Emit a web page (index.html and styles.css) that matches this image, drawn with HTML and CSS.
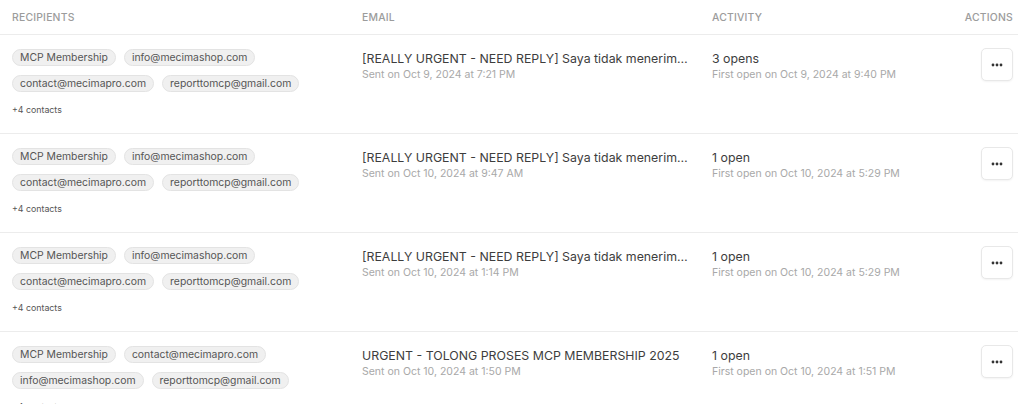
FILE: index.html
```html
<!DOCTYPE html>
<html lang="en">
<head>
    <meta charset="UTF-8">
    <meta name="viewport" content="width=device-width, initial-scale=1.0">
    <title>Sent emails</title>
    <link rel="stylesheet" href="styles.css">
</head>
<body>
    <div class="table">
        <div class="row head">
            <div class="cell">Recipients</div>
            <div class="cell">Email</div>
            <div class="cell">Activity</div>
            <div class="cell actions">Actions</div>
        </div>

        <div class="row">
            <div class="cell">
                <div class="chips">
                    <span class="chip">MCP Membership</span>
                    <span class="chip">info@mecimashop.com</span>
                    <span class="chip">contact@mecimapro.com</span>
                    <span class="chip">reporttomcp@gmail.com</span>
                </div>
                <div class="more">+4 contacts</div>
            </div>
            <div class="cell">
                <div class="title">[REALLY URGENT - NEED REPLY] Saya tidak menerima balasan apapun</div>
                <div class="sub">Sent on Oct 9, 2024 at 7:21 PM</div>
            </div>
            <div class="cell">
                <div class="title">3 opens</div>
                <div class="sub">First open on Oct 9, 2024 at 9:40 PM</div>
            </div>
            <div class="cell actions">
                <button class="menu-btn"><svg width="12" height="4" viewBox="0 0 12 4"><circle cx="2" cy="2" r="1.4"/><circle cx="6" cy="2" r="1.4"/><circle cx="10" cy="2" r="1.4"/></svg></button>
            </div>
        </div>

        <div class="row">
            <div class="cell">
                <div class="chips">
                    <span class="chip">MCP Membership</span>
                    <span class="chip">info@mecimashop.com</span>
                    <span class="chip">contact@mecimapro.com</span>
                    <span class="chip">reporttomcp@gmail.com</span>
                </div>
                <div class="more">+4 contacts</div>
            </div>
            <div class="cell">
                <div class="title">[REALLY URGENT - NEED REPLY] Saya tidak menerima balasan apapun</div>
                <div class="sub">Sent on Oct 10, 2024 at 9:47 AM</div>
            </div>
            <div class="cell">
                <div class="title">1 open</div>
                <div class="sub">First open on Oct 10, 2024 at 5:29 PM</div>
            </div>
            <div class="cell actions">
                <button class="menu-btn"><svg width="12" height="4" viewBox="0 0 12 4"><circle cx="2" cy="2" r="1.4"/><circle cx="6" cy="2" r="1.4"/><circle cx="10" cy="2" r="1.4"/></svg></button>
            </div>
        </div>

        <div class="row">
            <div class="cell">
                <div class="chips">
                    <span class="chip">MCP Membership</span>
                    <span class="chip">info@mecimashop.com</span>
                    <span class="chip">contact@mecimapro.com</span>
                    <span class="chip">reporttomcp@gmail.com</span>
                </div>
                <div class="more">+4 contacts</div>
            </div>
            <div class="cell">
                <div class="title">[REALLY URGENT - NEED REPLY] Saya tidak menerima balasan apapun</div>
                <div class="sub">Sent on Oct 10, 2024 at 1:14 PM</div>
            </div>
            <div class="cell">
                <div class="title">1 open</div>
                <div class="sub">First open on Oct 10, 2024 at 5:29 PM</div>
            </div>
            <div class="cell actions">
                <button class="menu-btn"><svg width="12" height="4" viewBox="0 0 12 4"><circle cx="2" cy="2" r="1.4"/><circle cx="6" cy="2" r="1.4"/><circle cx="10" cy="2" r="1.4"/></svg></button>
            </div>
        </div>

        <div class="row">
            <div class="cell">
                <div class="chips">
                    <span class="chip">MCP Membership</span>
                    <span class="chip">contact@mecimapro.com</span>
                    <span class="chip">info@mecimashop.com</span>
                    <span class="chip">reporttomcp@gmail.com</span>
                </div>
                <div class="more">+4 contacts</div>
            </div>
            <div class="cell">
                <div class="title">URGENT - TOLONG PROSES MCP MEMBERSHIP 2025</div>
                <div class="sub">Sent on Oct 10, 2024 at 1:50 PM</div>
            </div>
            <div class="cell">
                <div class="title">1 open</div>
                <div class="sub">First open on Oct 10, 2024 at 1:51 PM</div>
            </div>
            <div class="cell actions">
                <button class="menu-btn"><svg width="12" height="4" viewBox="0 0 12 4"><circle cx="2" cy="2" r="1.4"/><circle cx="6" cy="2" r="1.4"/><circle cx="10" cy="2" r="1.4"/></svg></button>
            </div>
        </div>
    </div>
</body>
</html>
```

FILE: styles.css
```css
body {
    margin: 0;
    font-family: Inter, "Liberation Sans", sans-serif;
    background-color: white;
    color: #3d3d3d;
    overflow: hidden;
}
.table {
    width: 1018px;
}
.row {
    display: grid;
    grid-template-columns: 350px 350px 1fr 80px;
    border-bottom: 1px solid #ececec;
    padding: 14px 0 16px;
}
.row.head {
    padding: 0;
    height: 34px;
    align-items: center;
    font-size: 10.4px;
    font-weight: 500;
    color: #9c9c9c;
    text-transform: uppercase;
    letter-spacing: 0.2px;
}
.cell {
    padding: 0 12px;
    min-width: 0;
}
.cell.actions {
    padding: 0 5px 0 0;
    text-align: right;
}
.chips {
    display: flex;
    flex-wrap: wrap;
    gap: 9px 8px;
}
.chip {
    font-size: 10.4px;
    line-height: 15px;
    padding: 0 7px;
    color: #555;
    background-color: #f0f0f0;
    border: 1px solid #e3e3e3;
    border-radius: 9px;
}
.more {
    margin-top: 11px;
    font-size: 8.8px;
    line-height: 14px;
    color: #555;
}
.title {
    margin-top: 2px;
    font-size: 12.35px;
    line-height: 16px;
    color: #3d3d3d;
    white-space: nowrap;
    overflow: hidden;
    text-overflow: ellipsis;
}
.sub {
    font-size: 10.5px;
    line-height: 15px;
    color: #a8a8a8;
    white-space: nowrap;
}
.menu-btn {
    width: 32px;
    height: 33px;
    margin-top: -1px;
    padding: 0;
    background-color: white;
    border: 1px solid #e8e8e8;
    border-radius: 5px;
    box-shadow: 0 1px 2px rgba(0, 0, 0, 0.05);
    display: inline-flex;
    align-items: center;
    justify-content: center;
    cursor: pointer;
}
.menu-btn svg {
    fill: #333;
}
```
